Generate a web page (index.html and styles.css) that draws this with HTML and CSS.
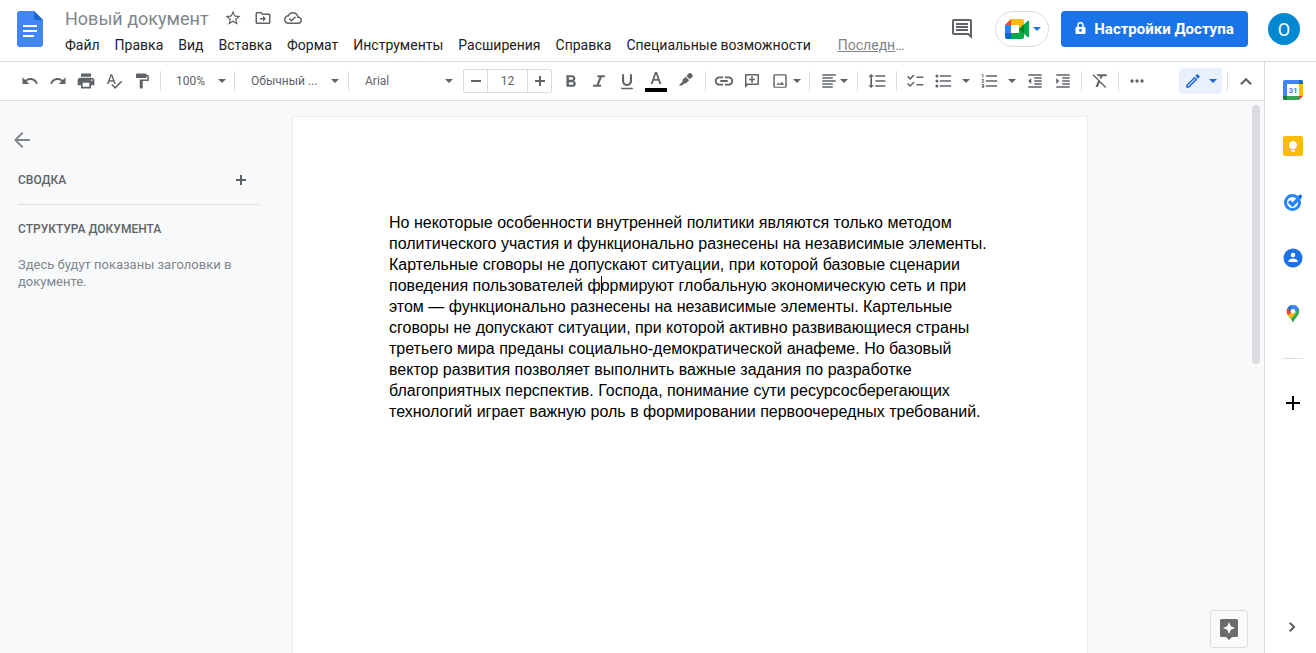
FILE: index.html
```html
<!DOCTYPE html>
<html lang="ru">
<head>
<meta charset="utf-8">
<meta name="viewport" content="width=device-width, initial-scale=1">
<title>Новый документ</title>
<link rel="stylesheet" href="styles.css">
</head>
<body>
<header class="header">
  <a class="logo" href="#" aria-label="Документы">
    <svg width="26" height="36" viewBox="0 0 26 36"><path fill="#4285f4" d="M3 0h14l9 9v24a3 3 0 0 1-3 3H3a3 3 0 0 1-3-3V3a3 3 0 0 1 3-3z"/><path fill="#1967d2" d="M17 0l9 9h-9z"/><path fill="#fff" d="M6 14h14v2H6zM6 19h14v2H6zM6 24h11v2H6z"/></svg>
  </a>
  <div class="heading">
    <div class="title-row">
      <input class="title" type="text" value="Новый документ" aria-label="Название документа">
      <button class="title-btn" aria-label="Пометить"><svg class="i18" viewBox="0 0 24 24"><path d="M22 9.24l-7.19-.62L12 2 9.19 8.63 2 9.24l5.46 4.73L5.82 21 12 17.27 18.18 21l-1.63-7.03L22 9.24zM12 15.4l-3.76 2.27 1-4.28-3.32-2.88 4.38-.38L12 6.1l1.71 4.04 4.38.38-3.32 2.88 1 4.28L12 15.4z"/></svg></button>
      <button class="title-btn" aria-label="Переместить"><svg class="i18" viewBox="0 0 24 24"><path d="M20 6h-8l-2-2H4c-1.100 0-2 .9-2 2v12c0 1.100.9 2 2 2h16c1.100 0 2-.9 2-2V8c0-1.100-.9-2-2-2zm0 12H4V6h5.200l2 2H20v10zM12 17l4-4-4-4v3H8v2h4z"/></svg></button>
      <button class="title-btn" aria-label="Состояние документа"><svg class="i18" viewBox="0 0 24 24"><path d="M19.35 10.04C18.67 6.59 15.64 4 12 4 9.11 4 6.61 5.64 5.36 8.04 2.35 8.36 0 10.9 0 14c0 3.31 2.69 6 6 6h13c2.76 0 5-2.24 5-5 0-2.64-2.05-4.78-4.65-4.96zM19 18H6c-2.21 0-4-1.79-4-4 0-2.05 1.53-3.76 3.56-3.97l1.07-.11.5-.95C8.08 7.14 9.94 6 12 6c2.62 0 4.88 1.86 5.39 4.43l.3 1.5 1.53.11c1.56.1 2.78 1.41 2.78 2.960 0 1.650-1.350 3-3 3zm-9-3.82l-2.09-2.09L6.500 13.500 10 17l6.010-6.010-1.410-1.410z"/></svg></button>
    </div>
    <nav class="menu">
      <button>Файл</button><button>Правка</button><button>Вид</button><button>Вставка</button><button>Формат</button><button>Инструменты</button><button>Расширения</button><button>Справка</button><button>Специальные возможности</button>
      <span class="last-edit"><a href="#">Последн</a>…</span>
    </nav>
  </div>
  <div class="actions">
    <button class="comments" aria-label="Комментарии"><svg width="24" height="24" viewBox="0 0 24 24"><path d="M21.990 4c0-1.100-.89-2-1.990-2H4c-1.100 0-2 .9-2 2v12c0 1.100.9 2 2 2h14l4 4-.01-18zM20 4v13.170L18.830 16H4V4h16zM6 12h12v2H6zm0-3h12v2H6zm0-3h12v2H6z"/></svg></button>
    <button class="meet" aria-label="Видеовстреча">
      <svg width="24" height="20" viewBox="0 0 24 20"><path fill="#ea4335" d="M6 0v6H0z"/><path fill="#fbbc04" d="M6 0h11c1.500 0 2 1 2 2v5l-5 4V6H6z"/><path fill="#2684fc" d="M0 6h6v8H0z"/><path fill="#0066da" d="M0 14h6v6H2c-1.200 0-2-1-2-2z"/><path fill="#00ac47" d="M6 14h8v-4l5-4v12c0 1-.7 2-2 2H6z"/><path fill="#00ac47" d="M14 10l8.500-8c.7-.6 1.500 0 1.500.6v14.800c0 .7-.8 1.200-1.500.6z"/><path fill="#00832d" d="M14 10l5-4.500v9z"/></svg>
      <svg class="caret" viewBox="0 0 8 4"><path d="M0 0h8L4 4z"/></svg>
    </button>
    <button class="share"><svg width="11" height="14" viewBox="0 0 11 14"><path fill="none" stroke="currentColor" stroke-width="1.500" d="M3 5V3.200a2.500 2.500 0 0 1 5 0V5"/><path fill="currentColor" fill-rule="evenodd" d="M1.500 5h8a1 1 0 0 1 1 1v5a1 1 0 0 1-1 1h-8a1 1 0 0 1-1-1V6a1 1 0 0 1 1-1zM5.500 7a1.400 1.400 0 1 0 0 2.800 1.400 1.400 0 0 0 0-2.800z"/></svg>Настройки Доступа</button>
    <button class="avatar">О</button>
  </div>
</header>
<div class="workspace">
  <div class="editor">
    <div class="toolbar" role="toolbar">
      <button class="tool" aria-label="Отменить"><svg class="i18" viewBox="0 0 24 24"><path d="M12.500 8c-2.650 0-5.050.99-6.900 2.600L2 7v9h9l-3.620-3.620c1.390-1.160 3.160-1.880 5.120-1.880 3.540 0 6.550 2.310 7.600 5.500l2.370-.78C21.080 11.030 17.150 8 12.500 8z"/></svg></button>
      <button class="tool" aria-label="Повторить"><svg class="i18" viewBox="0 0 24 24"><path d="M18.400 10.600C16.550 8.990 14.150 8 11.500 8c-4.650 0-8.580 3.030-9.960 7.220L3.900 16c1.050-3.190 4.050-5.500 7.600-5.500 1.950 0 3.730.72 5.120 1.880L13 16h9V7l-3.600 3.600z"/></svg></button>
      <button class="tool" aria-label="Печать"><svg class="i20" viewBox="0 0 24 24"><path d="M19 8H5c-1.660 0-3 1.340-3 3v6h4v4h12v-4h4v-6c0-1.660-1.340-3-3-3zm-3 11H8v-5h8v5zm3-7c-.55 0-1-.45-1-1s.45-1 1-1 1 .45 1 1-.45 1-1 1zm-1-9H6v4h12V3z"/></svg></button>
      <button class="tool" aria-label="Проверка правописания"><svg class="i18" viewBox="0 0 24 24"><path d="M12.450 16h2.090L9.430 3H7.570L2.460 16h2.090l1.120-3h5.640l1.140 3zm-6.020-5L8.500 5.480 10.570 11H6.430zm15.160.59l-8.090 8.090L9.830 16l-1.410 1.410 5.090 5.090L23 13l-1.410-1.410z"/></svg></button>
      <button class="tool" aria-label="Копировать форматирование"><svg class="i18" viewBox="0 0 24 24"><path d="M18 4V3c0-.55-.45-1-1-1H5c-.55 0-1 .45-1 1v4c0 .55.45 1 1 1h12c.55 0 1-.45 1-1V6h1v4H9v11c0 .55.45 1 1 1h2c.55 0 1-.45 1-1v-9h8V4h-3z"/></svg></button>
      <i class="sep"></i>
      <span class="pick pick-zoom"><select aria-label="Масштаб"><option>100%</option></select><svg class="caret" viewBox="0 0 8 4"><path d="M0 0h8L4 4z"/></svg></span>
      <i class="sep"></i>
      <span class="pick pick-style"><select aria-label="Стили"><option>Обычный ...</option></select><svg class="caret" viewBox="0 0 8 4"><path d="M0 0h8L4 4z"/></svg></span>
      <i class="sep"></i>
      <span class="pick pick-font"><select aria-label="Шрифт"><option>Arial</option></select><svg class="caret" viewBox="0 0 8 4"><path d="M0 0h8L4 4z"/></svg></span>
      <div class="size">
        <button aria-label="Уменьшить"><svg width="10" height="10" viewBox="0 0 10 10"><path d="M0 4h10v2H0z"/></svg></button>
        <input type="text" value="12" aria-label="Размер шрифта">
        <button aria-label="Увеличить"><svg width="10" height="10" viewBox="0 0 10 10"><path d="M0 4h10v2H0zM4 0h2v10H4z"/></svg></button>
      </div>
      <button class="tool first" aria-label="Полужирный"><svg class="i20" viewBox="0 0 24 24"><path d="M15.600 11.790c.97-.67 1.650-1.770 1.650-2.790 0-2.260-1.750-4-4-4H6.500v14h7.540c2.090 0 3.710-1.700 3.710-3.790 0-1.520-.86-2.820-2.150-3.420zM9.500 7.500h3.500c.83 0 1.500.67 1.500 1.500s-.67 1.500-1.500 1.500H9.500v-3zm4 9h-4v-3h4c.83 0 1.500.67 1.500 1.500s-.67 1.500-1.500 1.500z"/></svg></button>
      <button class="tool" aria-label="Курсив"><svg class="i20" viewBox="0 0 24 24"><path d="M10 5v2.500h2.600L9 16.500H5V19h9.500v-2.500h-2.700l3.600-9H19V5z"/></svg></button>
      <button class="tool" aria-label="Подчеркнутый"><svg class="i20" viewBox="0 0 24 24"><path d="M12 18c3.310 0 6-2.690 6-6V4h-2.500v8c0 1.930-1.570 3.500-3.500 3.500S8.500 13.930 8.500 12V4H6v8c0 3.310 2.690 6 6 6zm-7 2v2h14v-2H5z"/></svg></button>
      <button class="tool wide" aria-label="Цвет текста"><svg width="22" height="22" viewBox="0 0 22 22"><path d="M9.900 2h2.200l4.300 12h-2l-1.100-3.200H8.700L7.600 14h-2zM9.300 9.100h3.400L11 4.200z"/><path fill="#000" d="M0 18h22v4H0z"/></svg></button>
      <button class="tool wide" aria-label="Цвет выделения"><svg width="16" height="16" viewBox="0 0 16 16"><path d="M11 .3c.6-.6 1.300-.6 1.900 0l1.500 1.500c.6.6.6 1.300 0 1.900L11.800 6.300 8.400 2.900zM7.600 3.700l3.500 3.500-3 3-1.700.2L4 12.500H.8L4.500 8.800l.1-2.100z"/></svg></button>
      <i class="sep"></i>
      <button class="tool" aria-label="Вставить ссылку"><svg width="22" height="22" viewBox="0 0 24 24"><path d="M3.900 12c0-1.710 1.390-3.100 3.100-3.100h4V7H7c-2.760 0-5 2.240-5 5s2.240 5 5 5h4v-1.900H7c-1.710 0-3.100-1.390-3.100-3.100zM8 13h8v-2H8v2zm9-6h-4v1.900h4c1.710 0 3.100 1.390 3.100 3.100s-1.390 3.100-3.100 3.100h-4V17h4c2.760 0 5-2.240 5-5s-2.240-5-5-5z"/></svg></button>
      <button class="tool" aria-label="Добавить комментарий"><svg width="16" height="16" viewBox="0 0 16 16"><path fill-rule="evenodd" d="M1 2a1 1 0 0 1 1-1h12a1 1 0 0 1 1 1v9a1 1 0 0 1-1 1H4l-3 3zm1.500.500v8h11v-8zM7.200 3.300h1.600v2.400H11v1.600H8.800v2.400H7.200V7.300H5V5.700h2.200z"/></svg></button>
      <button class="tool drop" aria-label="Вставить изображение"><svg class="i18" viewBox="0 0 24 24"><path d="M19 4.500v15H5v-15h14M19 3H5c-1.100 0-2 .9-2 2v14c0 1.100.9 2 2 2h14c1.100 0 2-.9 2-2V5c0-1.100-.9-2-2-2zm-4.500 10l-2.500 3-2-2-3 3h11l-3.500-4z"/></svg><svg class="caret" viewBox="0 0 8 4"><path d="M0 0h8L4 4z"/></svg></button>
      <i class="sep"></i>
      <button class="tool drop tight" aria-label="Выравнивание"><svg class="i18" viewBox="0 0 24 24"><path d="M17 15H3v2h14v-2zm0-8H3v2h14V7zM3 13h18v-2H3v2zm0 8h14v-2H3v2zM3 3v2h18V3H3z"/></svg><svg class="caret" viewBox="0 0 8 4"><path d="M0 0h8L4 4z"/></svg></button>
      <i class="sep"></i>
      <button class="tool wide" aria-label="Интервал"><svg class="i20" viewBox="0 0 24 24"><path d="M6 7h2.500L5 3.500 1.500 7H4v10H1.500L5 20.500 8.500 17H6V7zm4-2v2h12V5H10zm0 14h12v-2H10v2zm0-6h12v-2H10v2z"/></svg></button>
      <i class="sep"></i>
      <button class="tool" aria-label="Контрольный список"><svg class="i18" viewBox="0 0 24 24"><path d="M23 6h-9v2h9V6zm0 10h-9v2h9v-2zM5.500 10.500L1.500 6.500l1.400-1.400 2.600 2.600L10 3.200l1.400 1.400zM5.500 20l-4-4 1.400-1.400 2.600 2.600 4.500-4.500 1.400 1.400z"/></svg></button>
      <button class="tool list" aria-label="Маркированный список"><svg class="i20" viewBox="0 0 24 24"><path d="M3.500 4.200a1.800 1.800 0 1 0 0 3.600 1.800 1.800 0 0 0 0-3.600zm0 6a1.800 1.800 0 1 0 0 3.600 1.800 1.800 0 0 0 0-3.600zm0 6a1.800 1.800 0 1 0 0 3.600 1.800 1.800 0 0 0 0-3.600zM7 19h13.500v-2H7v2zm0-6h13.500v-2H7v2zm0-8v2h13.500V5H7z"/></svg><svg class="caret" viewBox="0 0 8 4"><path d="M0 0h8L4 4z"/></svg></button>
      <button class="tool list" aria-label="Нумерованный список"><svg class="i20" viewBox="0 0 24 24"><path d="M2 17h2v.5H3v1h1v.5H2v1h3v-4H2v1zm1-9h1V4H2v1h1v3zm-1 3h1.800L2 13.100v.9h3v-1H3.200L5 10.900V10H2v1zm5-6v2h13.500V5H7zm0 14h13.500v-2H7v2zm0-6h13.500v-2H7v2z"/></svg><svg class="caret" viewBox="0 0 8 4"><path d="M0 0h8L4 4z"/></svg></button>
      <button class="tool" aria-label="Уменьшить отступ"><svg class="i18" viewBox="0 0 24 24"><path d="M11 17h10v-2H11v2zm-8-5l4 4V8l-4 4zm0 9h18v-2H3v2zM3 3v2h18V3H3zm8 6h10V7H11v2zm0 4h10v-2H11v2z"/></svg></button>
      <button class="tool" aria-label="Увеличить отступ"><svg class="i18" viewBox="0 0 24 24"><path d="M3 21h18v-2H3v2zM3 8v8l4-4-4-4zm8 9h10v-2H11v2zM3 3v2h18V3H3zm8 6h10V7H11v2zm0 4h10v-2H11v2z"/></svg></button>
      <i class="sep"></i>
      <button class="tool" aria-label="Очистить форматирование"><svg class="i18" viewBox="0 0 24 24"><path d="M3.270 3L2 4.270l7.470 7.470L6 20h3l2.700-6L19 21.300 20.300 20 3.270 3zM7 3l2.500 2.500h3.200l-1 2.500 1.800 1.800L15.500 5.500H21V3H7z"/></svg></button>
      <i class="sep"></i>
      <button class="tool" aria-label="Ещё"><svg width="14" height="4" viewBox="0 0 14 4"><circle cx="2" cy="2" r="1.700"/><circle cx="7" cy="2" r="1.700"/><circle cx="12" cy="2" r="1.700"/></svg></button>
      <button class="mode" aria-label="Режим редактирования"><svg class="i18" viewBox="0 0 24 24"><path d="M14.060 9.020l.92.92L5.920 19H5v-.92l9.060-9.060M17.660 3c-.25 0-.51.1-.7.29l-1.830 1.830 3.750 3.750 1.830-1.830c.39-.39.39-1.020 0-1.410l-2.340-2.340c-.2-.2-.45-.29-.71-.29zm-3.600 3.190L3 17.250V21h3.750L17.810 9.940l-3.750-3.750z"/></svg><svg class="caret" viewBox="0 0 8 4"><path d="M0 0h8L4 4z"/></svg></button>
      <i class="sep"></i>
      <button class="tool" aria-label="Скрыть меню"><svg class="i20" viewBox="0 0 24 24"><path d="M12 8l-7 7 1.800 1.800 5.200-5.200 5.200 5.200L19 15z"/></svg></button>
    </div>
    <main class="canvas">
      <aside class="outline">
        <button class="back" aria-label="Закрыть структуру"><svg width="16" height="16" viewBox="0 0 16 16"><path d="M16 7H3.800l5.600-5.600L8 0 0 8l8 8 1.400-1.400L3.800 9H16z"/></svg></button>
        <div class="summary"><h2>СВОДКА</h2><button aria-label="Добавить сводку"><svg width="10" height="10" viewBox="0 0 10 10"><path d="M0 4h10v2H0zM4 0h2v10H4z"/></svg></button></div>
        <h2>СТРУКТУРА ДОКУМЕНТА</h2>
        <p>Здесь будут показаны заголовки в документе.</p>
      </aside>
      <article class="page">
        <p>Но некоторые особенности внутренней политики являются только методом политического участия и функционально разнесены на независимые элементы. Картельные сговоры не допускают ситуации, при которой базовые сценарии поведения пользователей ф<span class="cursor"></span>ормируют глобальную экономическую сеть и при этом — функционально разнесены на независимые элементы. Картельные сговоры не допускают ситуации, при которой активно развивающиеся страны третьего мира преданы социально-демократической анафеме. Но базовый вектор развития позволяет выполнить важные задания по разработке благоприятных перспектив. Господа, понимание сути ресурсосберегающих технологий играет важную роль в формировании первоочередных требований.</p>
      </article>
      <div class="scrollbar"></div>
      <button class="explore" aria-label="Анализ данных"><svg width="18" height="21" viewBox="0 0 18 21"><path fill-rule="evenodd" d="M1.500 0h15A1.500 1.500 0 0 1 18 1.500v15a1.500 1.500 0 0 1-1.500 1.500H12l-3 3-3-3H1.500A1.500 1.500 0 0 1 0 16.500v-15A1.500 1.500 0 0 1 1.500 0zM9 3L7.200 7.200 3 9l4.200 1.800L9 15l1.800-4.200L15 9l-4.200-1.800z"/></svg></button>
    </main>
  </div>
  <aside class="rail">
    <button aria-label="Календарь"><svg width="20" height="20" viewBox="0 0 20 20"><path fill="#fff" d="M4 4h12v12H4z"/><path fill="#4285f4" d="M1.500 0H16v4H4v12H0V1.500A1.500 1.500 0 0 1 1.500 0z"/><path fill="#1967d2" d="M16 0h2.500A1.500 1.500 0 0 1 20 1.500V4h-4z"/><path fill="#fbbc04" d="M16 4h4v12h-4z"/><path fill="#34a853" d="M4 16h12v4H4z"/><path fill="#188038" d="M0 16h4v4H1.500A1.500 1.500 0 0 1 0 18.500z"/><path fill="#ea4335" d="M16 16h4l-4 4z"/><text class="cal-day" x="10" y="13" text-anchor="middle">31</text></svg></button>
    <button aria-label="Keep"><svg width="20" height="20" viewBox="0 0 20 20"><rect width="20" height="20" rx="2" fill="#fbbc04"/><path fill="#fff" d="M10 5a4 4 0 0 0-2.200 7.300V13h4.400v-.7A4 4 0 0 0 10 5zM8 14h4v1.500H8z"/></svg></button>
    <button aria-label="Задачи"><svg width="20" height="20" viewBox="0 0 20 20"><circle cx="9.500" cy="10.500" r="7" fill="none" stroke="#2684fc" stroke-width="3"/><path d="M6 9.300l3.500 3.500L17.500 4.800" fill="none" stroke="#2684fc" stroke-width="3.400"/><path d="M15.300 3.800l2-1.600 2 2-2 2.200z" fill="#0066da"/></svg></button>
    <button aria-label="Контакты"><svg width="20" height="20" viewBox="0 0 20 20"><circle cx="10" cy="10" r="9.500" fill="#1a73e8"/><circle cx="10" cy="7" r="2.300" fill="#fff"/><path fill="#fff" d="M5.500 14v-1c0-1.500 3-2.500 4.500-2.500s4.500 1 4.500 2.500v1z"/></svg></button>
    <button aria-label="Карты"><svg width="20" height="20" viewBox="0 0 20 20"><defs><clipPath id="pin"><path d="M10 1a6.300 6.300 0 0 0-6.300 6.300c0 2.200 1 3.700 2.200 5.200C7.500 14.500 9 16 10 19c1-3 2.500-4.500 4.100-6.500 1.200-1.500 2.200-3 2.200-5.200A6.300 6.300 0 0 0 10 1z"/></clipPath></defs><g clip-path="url(#pin)"><path fill="#34a853" d="M0 0h20v20H0z"/><path fill="#fbbc04" d="M0 16L10 4l3 5-7 8z"/><path fill="#ea4335" d="M3 2l7 5-6 5-2-2z"/><path fill="#1a73e8" d="M4 3l4-3 3 3-4 4z"/><path fill="#4285f4" d="M7 0h10l-1 4-5 6-1-3z"/></g><circle cx="10" cy="7.300" r="2.300" fill="#fff"/></svg></button>
    <hr>
    <button class="add" aria-label="Установить дополнения"><svg width="14" height="14" viewBox="0 0 14 14"><path d="M0 6h14v2H0zM6 0h2v14H6z"/></svg></button>
    <button class="collapse" aria-label="Скрыть боковую панель"><svg width="8" height="10" viewBox="0 0 8 10"><path d="M1.500 0L0 1.400 3.600 5 0 8.600 1.500 10l5-5z"/></svg></button>
  </aside>
</div>
</body>
</html>
```

FILE: styles.css
```css
* { box-sizing: border-box; }

body {
  margin: 0;
  height: 100vh;
  display: flex;
  flex-direction: column;
  overflow: hidden;
  background: #fff;
  color: #202124;
  font-family: Roboto, sans-serif;
  font-size: 14px;
}

button, input, select {
  margin: 0;
  padding: 0;
  border: 0;
  background: none;
  color: inherit;
  font: inherit;
  outline: none;
}

button {
  display: flex;
  align-items: center;
  justify-content: center;
  flex: none;
  cursor: pointer;
}

svg { display: block; flex: none; fill: currentColor; }
.i18 { width: 18px; height: 18px; }
.i20 { width: 20px; height: 20px; }
.caret { width: 8px; height: 4px; }

/* Header */
.header {
  display: flex;
  align-items: flex-start;
  flex: none;
  height: 62px;
  border-bottom: 1px solid #dadce0;
}
.logo { padding: 11px 0 0 17px; }
.heading { flex: 1; min-width: 0; padding: 8px 0 0 22px; }
.title-row { display: flex; align-items: center; height: 20px; color: #5f6368; }
.title { width: 146px; margin-right: 12px; color: #80868b; font-size: 18px; }
.title-btn { width: 20px; margin-right: 10px; }
.menu { display: flex; align-items: center; gap: 15px; height: 34px; white-space: nowrap; }
.last-edit { margin-left: 12px; color: #80868b; }
.last-edit a { color: inherit; }
.actions { display: flex; align-items: center; flex: none; height: 58px; padding-right: 16px; }
.comments { margin-right: 21px; color: #5f6368; }
.meet {
  gap: 4px;
  width: 54px;
  height: 36px;
  margin-right: 12px;
  padding-left: 2px;
  border: 1px solid #dadce0;
  border-radius: 18px;
  color: #1a73e8;
}
.share {
  gap: 8px;
  width: 187px;
  height: 36px;
  margin-right: 20px;
  border-radius: 4px;
  background: #1a73e8;
  color: #fff;
  font-size: 15px;
  font-weight: 700;
}
.avatar {
  width: 32px;
  height: 32px;
  border-radius: 50%;
  background: #0288d1;
  color: #fff;
  font-size: 18px;
}

/* Toolbar */
.workspace { display: flex; flex: 1; min-height: 0; }
.editor { display: flex; flex-direction: column; flex: 1; min-width: 0; }
.toolbar {
  display: flex;
  align-items: center;
  flex: none;
  height: 39px;
  padding: 0 4px 0 16px;
  border-bottom: 1px solid #dadce0;
  color: #5f6368;
}
.tool { width: 28px; height: 26px; }
.tool.first { margin-left: 5px; }
.tool.wide { width: 30px; }
.tool.drop { width: 39px; gap: 4px; }
.tool.tight { gap: 2px; }
.tool.list { width: 46px; gap: 8px; }
.sep { flex: none; width: 1px; height: 20px; margin: 0 4px; background: #dadce0; }
.pick { display: grid; align-items: center; flex: none; height: 26px; font-size: 12px; }
.pick select { grid-area: 1 / 1; width: 100%; appearance: none; }
.pick .caret { grid-area: 1 / 1; justify-self: end; pointer-events: none; }
.pick-zoom { width: 50px; margin: 0 4px 0 11px; }
.pick-style { width: 88px; margin: 0 5px 0 12px; }
.pick-font { width: 88px; margin: 0 10px 0 12px; }
.size {
  display: flex;
  flex: none;
  width: 89px;
  height: 24px;
  border: 1px solid #dadce0;
  border-radius: 2px;
  font-size: 12px;
}
.size button { width: 23px; }
.size input {
  width: 41px;
  border: solid #dadce0;
  border-width: 0 1px;
  text-align: center;
}
.mode {
  gap: 7px;
  width: 43px;
  height: 26px;
  margin: 0 1px 0 auto;
  border-radius: 4px;
  background: #e8f0fe;
  color: #1967d2;
}

/* Canvas */
.canvas {
  position: relative;
  display: flex;
  flex: 1;
  min-height: 0;
  overflow: hidden;
  background: #f8f9fa;
}
.outline { flex: none; width: 292px; padding: 31px 33px 0 18px; color: #5f6368; }
.back { margin-left: -4px; color: #80868b; }
.summary {
  display: flex;
  align-items: center;
  justify-content: space-between;
  height: 49px;
  margin: 8px 0 16px;
  border-bottom: 1px solid #dadce0;
}
.summary button { width: 36px; height: 24px; }
.outline h2 { margin: 0; font-size: 12px; font-weight: 500; line-height: 16px; }
.outline p { margin: 19px 0 0; color: #80868b; font-size: 13px; line-height: 17px; }
.page {
  flex: none;
  width: 796px;
  margin-top: 15px;
  padding: 95px 94px 95px 96px;
  border: 1px solid #eceef0;
  border-bottom: 0;
  background: #fff;
  color: #000;
  font-family: "Liberation Sans", Arial, sans-serif;
  font-size: 16px;
  line-height: 21px;
}
.page p { margin: 0; }
.cursor { position: relative; }
.cursor::after {
  content: "";
  position: absolute;
  left: 0;
  bottom: 0;
  width: 1px;
  height: 18px;
  background: #000;
}
.scrollbar {
  position: absolute;
  top: 4px;
  right: 4px;
  width: 8px;
  height: 47%;
  border-radius: 4px;
  background: #dadce0;
}
.explore {
  position: absolute;
  right: 16px;
  bottom: 5px;
  width: 38px;
  height: 38px;
  border: 1px solid #dadce0;
  border-radius: 3px;
  background: #fafafa;
  color: #6b6b6b;
}

/* Side rail */
.rail {
  display: flex;
  flex-direction: column;
  align-items: center;
  flex: none;
  width: 52px;
  padding: 18px 0 16px 4px;
  gap: 36px;
  border-left: 1px solid #dadce0;
}
.rail hr { flex: none; width: 20px; height: 1px; margin: -2px 0 1px; border: 0; background: #dadce0; }
.add { color: #000; }
.collapse { margin-top: auto; height: 20px; color: #5f6368; }
.cal-day { fill: #4285f4; font-size: 8px; font-weight: 700; }
```
